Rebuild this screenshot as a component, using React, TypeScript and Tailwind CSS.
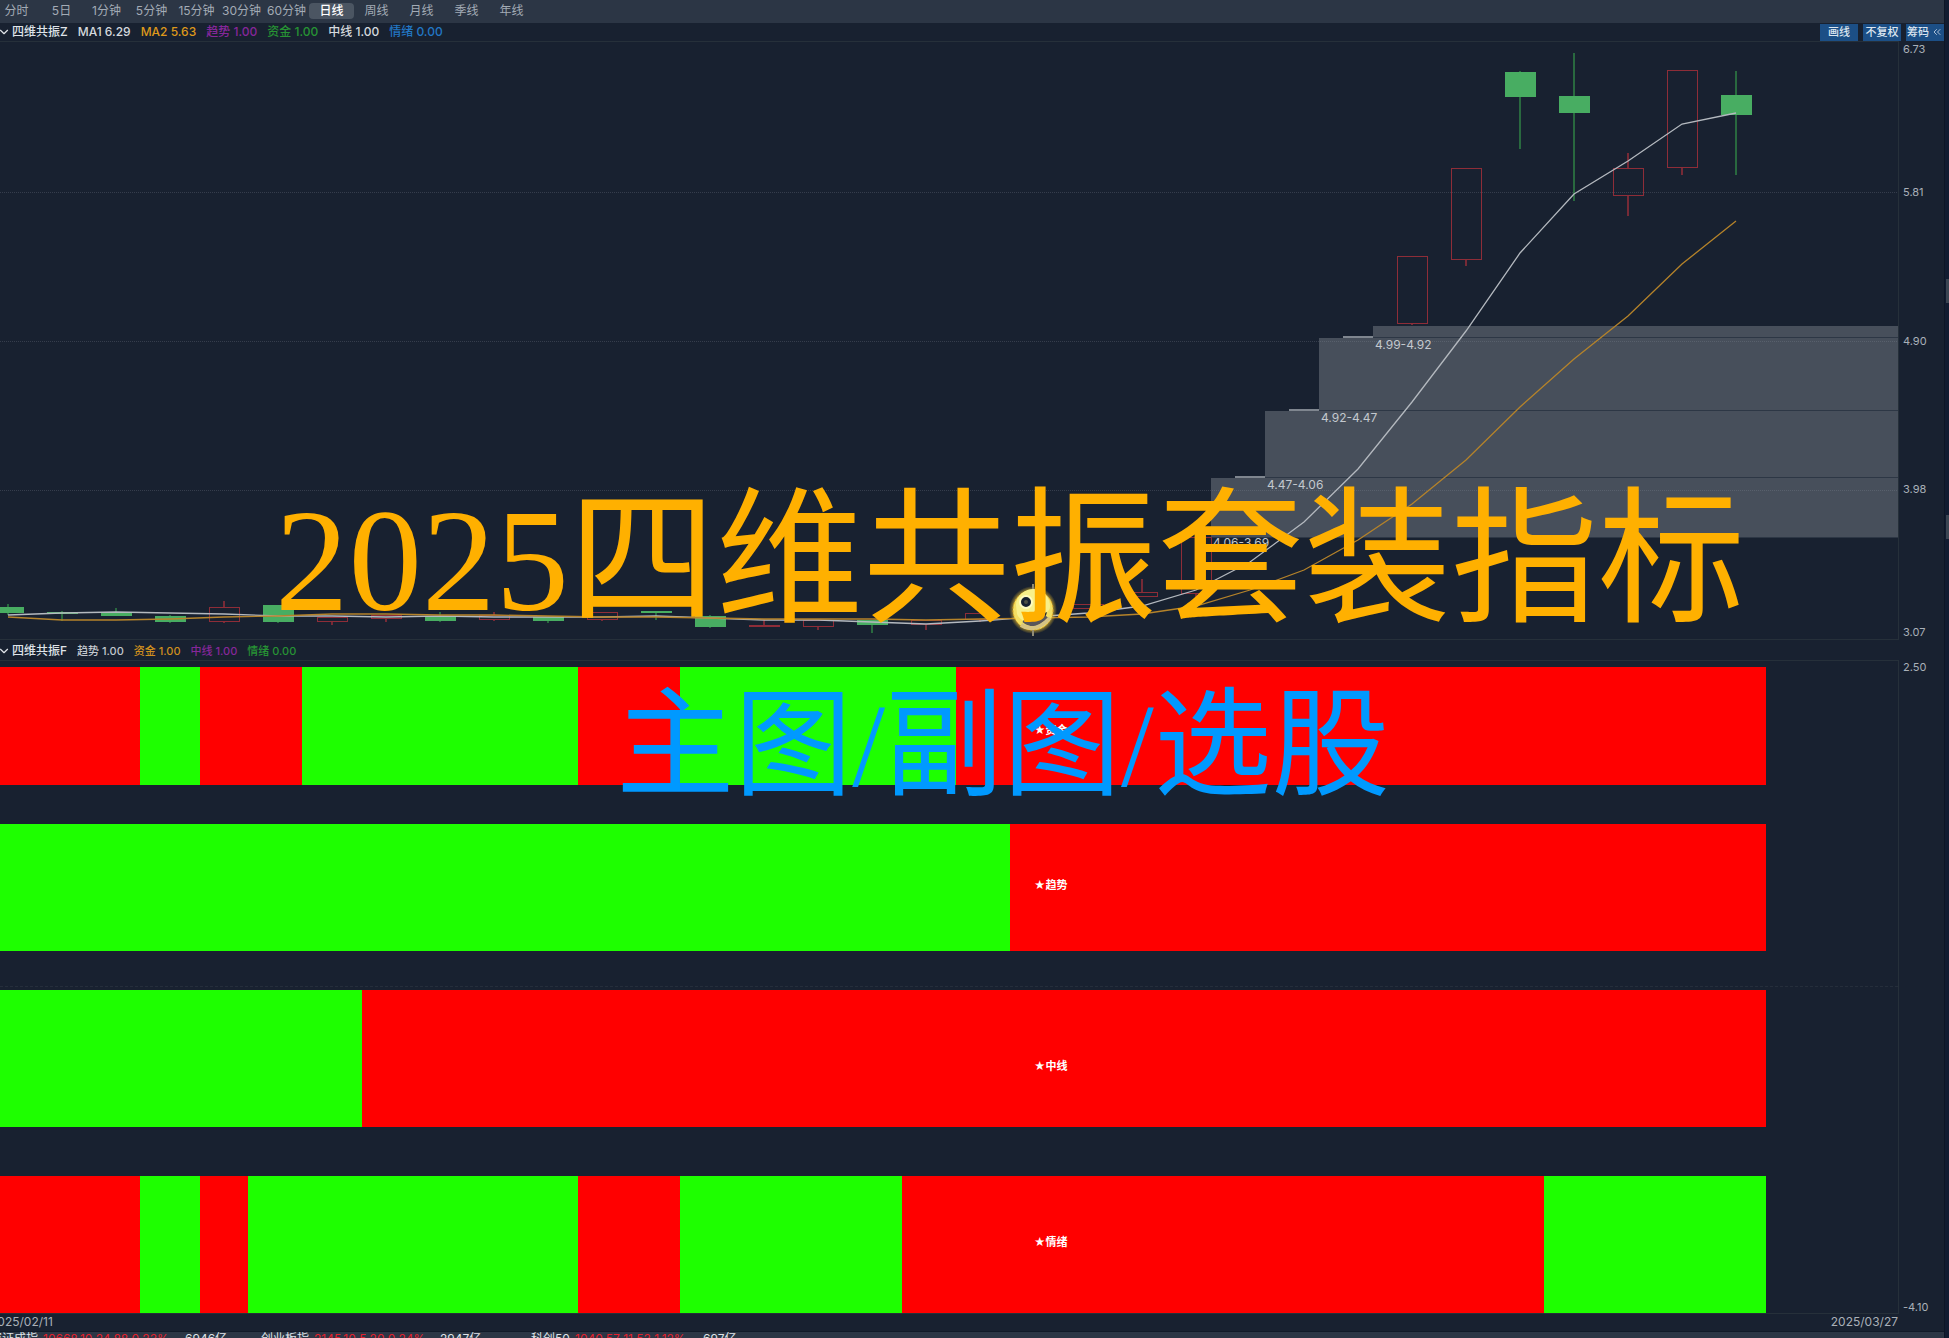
import React, { useState } from 'react';
import { ChevronDown, ChevronsLeft } from 'lucide-react';

const PERIODS = ['分时', '5日', '1分钟', '5分钟', '15分钟', '30分钟', '60分钟', '日线', '周线', '月线', '季线', '年线'];

// candle spacing and body width
const STEP = 54;
const BODY = 31;
const candleX = (i: number) => 8 + i * STEP;

// [index, body top, body bottom, wick top, wick bottom, kind]
type Candle = [number, number, number, number, number, 'up' | 'down' | 'flat'];

const CANDLES: Candle[] = [
  [0, 566, 572, 563, 574, 'down'],
  [1, 571, 573, 570, 580, 'down'],
  [2, 572, 575, 567, 575, 'down'],
  [3, 575, 581, 574, 582, 'down'],
  [4, 566, 581, 560, 582, 'up'],
  [5, 564, 581, 564, 582, 'down'],
  [6, 576, 581, 576, 584, 'up'],
  [7, 574, 578, 574, 581, 'up'],
  [8, 575, 580, 571, 581, 'down'],
  [9, 574, 579, 571, 580, 'up'],
  [10, 576, 580, 576, 582, 'down'],
  [11, 571, 579, 571, 580, 'up'],
  [12, 570, 572, 570, 579, 'down'],
  [13, 575, 586, 574, 587, 'down'],
  [14, 584, 586, 578, 586, 'up'],
  [15, 579, 586, 579, 589, 'up'],
  [16, 579, 584, 579, 592, 'down'],
  [17, 579, 584, 579, 589, 'up'],
  [18, 572, 579, 572, 581, 'up'],
  [20, 563, 568, 563, 568, 'up'],
  [21, 551, 556, 538, 556, 'up'],
  [22, 496, 553, 496, 559, 'up'],
  [23, 436, 437, 436, 437, 'flat'],
  [24, 369, 370, 369, 370, 'flat'],
  [25, 296, 297, 296, 297, 'flat'],
  [26, 215, 283, 215, 284, 'up'],
  [27, 127, 219, 127, 225, 'up'],
  [28, 31, 56, 30, 108, 'down'],
  [29, 55, 72, 12, 160, 'down'],
  [30, 127, 155, 112, 175, 'up'],
  [31, 29, 127, 29, 134, 'up'],
  [32, 54, 74, 30, 134, 'down'],
];

const MA1 = [574, 572, 571, 572, 573, 575, 575, 576, 575, 576, 576, 576, 575, 577, 579, 579, 581, 583, 580, 576, 572, 565, 549, 521, 481, 428, 361, 290, 212, 153, 120, 83, 72];
const MA2 = [576, 579, 579, 578, 576, 575, 573, 573, 574, 574, 575, 576, 576, 577, 578, 578, 578, 579, 578, 577, 576, 573, 565, 549, 529, 499, 463, 419, 366, 318, 275, 223, 180];

const toPoints = (values: number[]) => values.map((y, i) => `${candleX(i)},${y}`).join(' ');

const ZONES = [
  { x: 1211, top: 437, bottom: 496, label: '4.06-3.69', ly: 506 },
  { x: 1265, top: 370, bottom: 436, label: '4.47-4.06', ly: 448 },
  { x: 1319, top: 297, bottom: 369, label: '4.92-4.47', ly: 381 },
  { x: 1373, top: 285, bottom: 296, label: '4.99-4.92', ly: 308 },
];

const Sun = () => (
  <g transform="translate(1033 569)">
    <circle r="24" fill="url(#glow)" />
    <line x1="0" y1="-26" x2="0" y2="26" stroke="#8f8a74" strokeWidth="2" />
    <circle r="17" fill="#182130" stroke="#f3df62" strokeWidth="6" />
    <circle r="20" fill="none" stroke="#e0a722" strokeWidth="1" strokeDasharray="2 2" />
    <path d="M-17 -5A17 17 0 0 1 17 -3C16 5 6 2 5 8C2 13 -12 14 -16 4Z" fill="#f8f08a" />
    <circle cx="-7" cy="-8" r="6" fill="#182130" stroke="#fffbc0" strokeWidth="2" />
    <circle cx="-7" cy="-8" r="2" fill="#4d5044" />
    <path d="M-9 10Q2 19 13 6" fill="none" stroke="#59565a" strokeWidth="5" />
    <path d="M-12 15Q2 24 17 8" fill="none" stroke="#d5c384" strokeWidth="4" />
  </g>
);

const PriceChart = () => (
  <svg viewBox="0 1 1898 597" className="block w-full h-auto">
    <defs>
      <radialGradient id="glow">
        <stop offset="0.7" stopColor="#f5c62c" />
        <stop offset="1" stopColor="#f5c62c" stopOpacity="0" />
      </radialGradient>
    </defs>

    {ZONES.map((z) => (
      <g key={z.label}>
        <rect x={z.x} y={z.top} width={1898 - z.x} height={z.bottom - z.top} fill="#474f5b" />
        <rect x={z.x} y={z.bottom} width={1898 - z.x} height="1" fill="#2d3745" />
      </g>
    ))}
    {[151, 300, 449].map((y) => (
      <line key={y} x1="0" x2="1898" y1={y + 0.5} y2={y + 0.5} stroke="#8a94a0" strokeOpacity="0.25" strokeDasharray="1 1" />
    ))}
    {ZONES.map((z) => (
      <text key={z.label} x={z.x + 2} y={z.ly} fill="#c3c8ce" fontSize="12" className="font-['Inter',sans-serif]">
        {z.label}
      </text>
    ))}

    {CANDLES.map(([i, top, bottom, high, low, kind]) => {
      const x = candleX(i);
      const left = x - 15;
      if (kind === 'flat') {
        return <rect key={i} x={left} y={top - 1} width={BODY - 1} height="2" fill="#7f868f" />;
      }
      if (kind === 'down') {
        return (
          <g key={i}>
            <line x1={x} x2={x} y1={high} y2={low} stroke="#29693f" strokeWidth="2" />
            <rect x={left} y={top} width={BODY} height={bottom - top} fill="#48ad62" />
          </g>
        );
      }
      return (
        <g key={i} stroke="#8e2d38">
          <line x1={x} x2={x} y1={high} y2={top} strokeWidth="2" strokeOpacity="0.8" />
          <line x1={x} x2={x} y1={bottom} y2={low} strokeWidth="2" strokeOpacity="0.8" />
          <rect x={left + 0.5} y={top + 0.5} width={BODY - 1} height={bottom - top - 1} fill="none" />
        </g>
      );
    })}

    <polyline points={toPoints(MA1)} fill="none" stroke="#b4b9bf" strokeWidth="1.3" />
    <polyline points={toPoints(MA2)} fill="none" stroke="#b5832a" strokeWidth="1.3" />
    <Sun />
  </svg>
);

// widths run left to right and alternate between the two signals
const STRIPS = [
  { label: '★资金', first: 'red', widths: [140, 60, 102, 276, 102, 276, 810], box: 'h-[118px] mb-[39px]', pad: 'pt-2' },
  { label: '★趋势', first: 'green', widths: [1010, 756], box: 'h-[127px] mb-[39px]', pad: 'pb-1' },
  { label: '★中线', first: 'green', widths: [362, 1404], box: 'h-[137px] mb-[49px]', pad: 'pt-4' },
  { label: '★情绪', first: 'red', widths: [140, 60, 48, 330, 102, 222, 642, 222], box: 'h-[137px]', pad: 'pb-1' },
];

const SignalStrips = () => (
  <div className="relative pt-[6px] pr-[132px]">
    <div className="absolute inset-x-0 top-[325px] border-t border-dashed border-[#252e3b]" />
    {STRIPS.map((s) => (
      <div key={s.label} className={`relative flex ${s.box}`}>
        {s.widths.map((w, i) => (
          <div
            key={i}
            className={(i % 2 === 0) === (s.first === 'red') ? 'bg-[#ff0000]' : 'bg-[#1eff00]'}
            style={{ flex: `${w} 0 0px` }}
          />
        ))}
        <div className={`absolute inset-0 flex items-center pl-[1034px] text-[11px] font-bold text-white ${s.pad}`}>
          {s.label}
        </div>
      </div>
    ))}
  </div>
);

const Legend = ({ name, items, size }: { name: string; items: [string, string][]; size: string }) => (
  <div className={`flex items-center gap-[10px] whitespace-nowrap ${size}`}>
    <button className="flex items-center gap-px text-[12px] font-medium text-[#dfe3e8]">
      <ChevronDown size={14} strokeWidth={2} className="-ml-[3px]" />
      {name}
    </button>
    {items.map(([text, color]) => (
      <span key={text} className={`font-medium ${color}`}>{text}</span>
    ))}
  </div>
);

const QUOTES = [
  { name: '深证成指', change: '10668.10 24.88 0.23%', volume: '6946亿', cols: 'grid-cols-[53px_142px_42px]' },
  { name: '创业板指', change: '2145.10 5.20 0.24%', volume: '2947亿', cols: 'grid-cols-[53px_126px_57px]' },
  { name: '科创50', change: '1040.57 11.53 1.12%', volume: '697亿', cols: 'grid-cols-[44px_128px_42px]' },
];

export default function App() {
  const [period, setPeriod] = useState('日线');

  return (
    <div className="flex h-screen overflow-hidden bg-[#182130] font-['Inter','Noto_Sans_CJK_SC',sans-serif]">
      <main className="relative flex-1 min-w-0">
        <nav className="flex items-center h-[23px] pb-px -ml-[6px] bg-[#2c3645] text-[12px] text-[#a3abb5]">
          {PERIODS.map((p) => (
            <button
              key={p}
              onClick={() => setPeriod(p)}
              className={`w-[45px] h-4 leading-4 rounded-[4px] whitespace-nowrap ${p === period ? 'bg-[#4b5562] text-white font-medium' : ''}`}
            >
              {p}
            </button>
          ))}
        </nav>

        <div className="flex items-center justify-between h-[18px]">
          <Legend
            name="四维共振Z"
            size="text-[12px]"
            items={[
              ['MA1 6.29', 'text-[#d5d9de]'],
              ['MA2 5.63', 'text-[#dd981b]'],
              ['趋势 1.00', 'text-[#86279a]'],
              ['资金 1.00', 'text-[#279334]'],
              ['中线 1.00', 'text-[#d5d9de]'],
              ['情绪 0.00', 'text-[#2277c4]'],
            ]}
          />
          <div className="flex gap-[5px] text-[11px] font-medium text-[#dce6f0]">
            <button className="w-[38px] h-[17px] bg-[#1c4f86]">画线</button>
            <button className="w-[38px] h-[17px] bg-[#1c4f86]">不复权</button>
            <button className="flex items-center justify-center gap-[2px] w-[38px] h-[17px] bg-[#1c4f86]">
              筹码
              <ChevronsLeft size={12} strokeWidth={1.5} />
            </button>
          </div>
        </div>

        <section className="flex">
          <div className="flex-1 border-y border-r border-[#26303a]">
            <PriceChart />
          </div>
          <div className="flex flex-col w-[45px] pl-1 text-[11px] leading-4 text-[#a9b0b8]">
            <span>6.73</span>
            <div className="flex flex-col flex-1 justify-between py-[127px]">
              <span>5.81</span>
              <span>4.90</span>
              <span>3.98</span>
            </div>
            <span>3.07</span>
          </div>
        </section>

        <div className="flex items-center h-[20px] pt-[2px]">
          <Legend
            name="四维共振F"
            size="text-[11px]"
            items={[
              ['趋势 1.00', 'text-[#c3c8ce]'],
              ['资金 1.00', 'text-[#cf8f1e]'],
              ['中线 1.00', 'text-[#86279a]'],
              ['情绪 0.00', 'text-[#279334]'],
            ]}
          />
        </div>

        <section className="flex">
          <div className="flex-1 border-y border-r border-[#26303a]">
            <SignalStrips />
          </div>
          <div className="flex flex-col justify-between w-[45px] pl-1 text-[11px] leading-[14px] text-[#a9b0b8]">
            <span>2.50</span>
            <span>-4.10</span>
          </div>
        </section>

        <div className="flex justify-between h-[17px] pr-[46px] text-[12px] leading-4 text-[#a9b0b8]">
          <span className="-ml-[10px]">2025/02/11</span>
          <span>2025/03/27</span>
        </div>

        <footer className="flex gap-[34px] h-5 -ml-[10px] border-t border-[#111a28] bg-[#2c3645] text-[12px] leading-[14px] whitespace-nowrap text-[#dfe3e8]">
          {QUOTES.map((q) => (
            <div key={q.name} className={`grid ${q.cols}`}>
              <span>{q.name}</span>
              <span className="text-[#e5202c]">{q.change}</span>
              <span>{q.volume}</span>
            </div>
          ))}
        </footer>

        <div className="absolute inset-x-0 top-[487px] flex flex-col items-center pl-[76px] whitespace-nowrap pointer-events-none font-['Liberation_Serif','Noto_Sans_CJK_SC',serif]">
          <h1 className="text-[147px] leading-[147px] text-[#ffb000]">2025四维共振套装指标</h1>
          <h2 className="mt-[54px] pr-[14px] text-[118px] leading-[118px] text-[#0099ff]">主图/副图/选股</h2>
        </div>
      </main>

      <aside className="flex flex-col w-[5px] pt-[279px] gap-[212px] border-l border-[#0d1626] bg-[#121c31]">
        <div className="h-6 ml-px bg-[#3b4552]" />
        <div className="h-6 ml-px bg-[#3b4552]" />
      </aside>
    </div>
  );
}
